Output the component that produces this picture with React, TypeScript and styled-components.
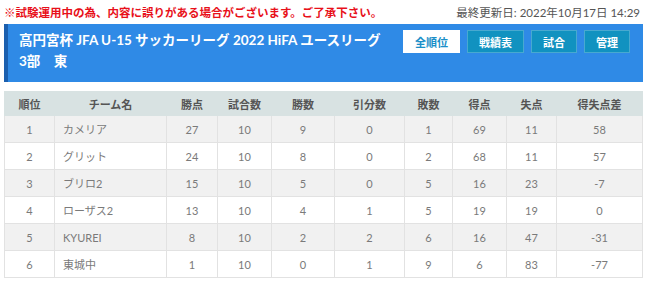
import React from 'react';
import styled, { createGlobalStyle } from 'styled-components';

const GlobalStyle = createGlobalStyle`
  body {
    margin: 0;
    background: #fff;
    font-family: Lato, "Noto Sans CJK JP", sans-serif;
  }
`;

const Page = styled.div`
  width: 650px;
  padding: 0 7px 0 4px;
  box-sizing: border-box;
`;

const Notice = styled.div`
  display: flex;
  justify-content: space-between;
  align-items: center;
  height: 24px;
  padding-right: 3px;
`;

const Warning = styled.span`
  color: #e8101a;
  font-size: 11.5px;
  font-weight: bold;
`;

const Updated = styled.span`
  color: #555;
  font-size: 11.5px;
`;

const Banner = styled.div`
  display: flex;
  justify-content: space-between;
  align-items: flex-start;
  height: 58px;
  box-sizing: border-box;
  background: #2f8ae6;
  border-left: 4px solid #1b5fae;
  padding: 6px 13px 0 11px;
`;

const Title = styled.h1`
  margin: 0;
  color: #fff;
  font-size: 13.5px;
  font-weight: bold;
  line-height: 21px;
`;

const Buttons = styled.div`
  display: flex;
  gap: 7px;
`;

const NavButton = styled.a<{ $active?: boolean }>`
  display: flex;
  align-items: center;
  justify-content: center;
  height: 23px;
  padding: 0 11px;
  box-sizing: border-box;
  font-size: 11px;
  font-weight: bold;
  background: ${(p) => (p.$active ? '#fff' : '#1192c0')};
  color: ${(p) => (p.$active ? '#1a8fc8' : '#fff')};
  border: 1px solid ${(p) => (p.$active ? '#fff' : '#48a9d0')};
`;

const Table = styled.table`
  margin-top: 9px;
  width: 638px;
  border-collapse: collapse;
  table-layout: fixed;
  font-size: 11px;
`;

const Th = styled.th`
  background: #d8e2e2;
  color: #555;
  font-weight: bold;
  height: 23px;
  padding: 0;
  border: 1px solid #d8e2e2;
`;

const Row = styled.tr<{ $odd: boolean }>`
  background: ${(p) => (p.$odd ? '#f1f1f1' : '#fff')};
`;

const Td = styled.td<{ $left?: boolean }>`
  height: 26px;
  padding: 0 ${(p) => (p.$left ? '8px' : '0')};
  text-align: ${(p) => (p.$left ? 'left' : 'center')};
  color: #7a7a7a;
  border: 1px solid #e2e2e2;
`;

const widths = [50, 112, 51, 54, 63, 70, 48, 54, 50, 86];
const heads = ['順位', 'チーム名', '勝点', '試合数', '勝数', '引分数', '敗数', '得点', '失点', '得失点差'];

const rows: (string | number)[][] = [
  [1, 'カメリア', 27, 10, 9, 0, 1, 69, 11, 58],
  [2, 'グリット', 24, 10, 8, 0, 2, 68, 11, 57],
  [3, 'ブリロ2', 15, 10, 5, 0, 5, 16, 23, -7],
  [4, 'ローザス2', 13, 10, 4, 1, 5, 19, 19, 0],
  [5, 'KYUREI', 8, 10, 2, 2, 6, 16, 47, -31],
  [6, '東城中', 1, 10, 0, 1, 9, 6, 83, -77],
];

const App: React.FC = () => {
  return (
    <Page>
      <GlobalStyle />
      <Notice>
        <Warning>※試験運用中の為、内容に誤りがある場合がございます。ご了承下さい。</Warning>
        <Updated>最終更新日: 2022年10月17日 14:29</Updated>
      </Notice>
      <Banner>
        <Title>
          高円宮杯 JFA U-15 サッカーリーグ 2022 HiFA ユースリーグ
          <br />
          3部　東
        </Title>
        <Buttons>
          <NavButton $active>全順位</NavButton>
          <NavButton>戦績表</NavButton>
          <NavButton>試合</NavButton>
          <NavButton>管理</NavButton>
        </Buttons>
      </Banner>
      <Table>
        <colgroup>
          {widths.map((w, i) => (
            <col key={i} style={{ width: w }} />
          ))}
        </colgroup>
        <thead>
          <tr>
            {heads.map((h) => (
              <Th key={h}>{h}</Th>
            ))}
          </tr>
        </thead>
        <tbody>
          {rows.map((r, i) => (
            <Row key={i} $odd={i % 2 === 0}>
              {r.map((c, j) => (
                <Td key={j} $left={j === 1}>
                  {c}
                </Td>
              ))}
            </Row>
          ))}
        </tbody>
      </Table>
    </Page>
  );
};

export default App;
